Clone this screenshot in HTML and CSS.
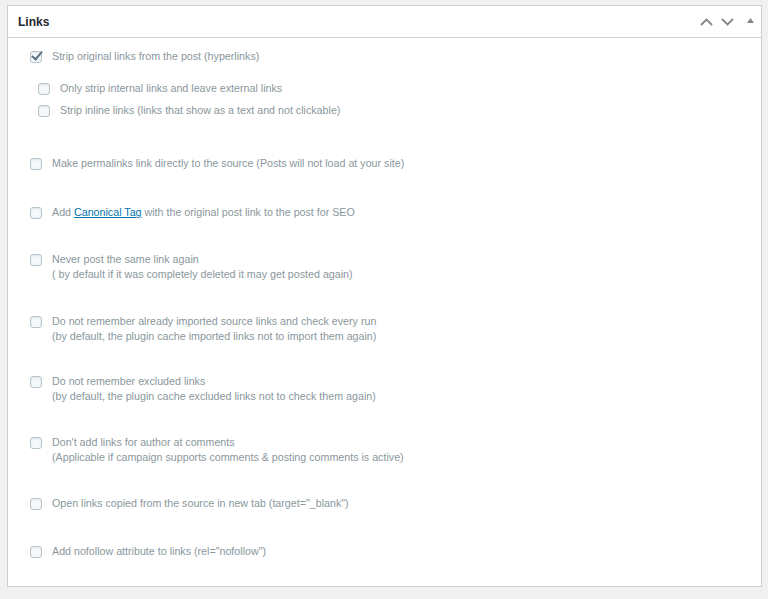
FILE: index.html
```html
<!DOCTYPE html>
<html>
<head>
    <title>Links</title>
    <link rel="stylesheet" href="styles.css">
</head>
<body>
    <div class="postbox">
        <div class="postbox-header">
            <h2>Links</h2>
            <div class="handle-actions">
                <svg width="13" height="8" viewBox="0 0 13 8"><path d="M1 7 L6.5 1.5 L12 7" fill="none" stroke="#82878c" stroke-width="1.8"/></svg>
                <svg width="13" height="8" viewBox="0 0 13 8"><path d="M1 1 L6.5 6.5 L12 1" fill="none" stroke="#82878c" stroke-width="1.8"/></svg>
                <svg width="7" height="5" viewBox="0 0 7 5"><path d="M0 5 L3.5 0 L7 5 Z" fill="#82878c"/></svg>
            </div>
        </div>

        <div class="inside">
            <div class="option first">
                <label><span class="box checked"></span><span>Strip original links from the post (hyperlinks)</span></label>
            </div>

            <div class="sub-options">
                <label><span class="box"></span><span>Only strip internal links and leave external links</span></label>
                <label><span class="box"></span><span>Strip inline links (links that show as a text and not clickable)</span></label>
            </div>

            <div class="option permalinks">
                <label><span class="box"></span><span>Make permalinks link directly to the source (Posts will not load at your site)</span></label>
            </div>

            <div class="option canonical">
                <label><span class="box"></span><span>Add <a href="#">Canonical Tag</a> with the original post link to the post for SEO</span></label>
            </div>

            <div class="option never">
                <label><span class="box"></span><span>Never post the same link again<br>( by default if it was completely deleted it may get posted again)</span></label>
            </div>

            <div class="option imported">
                <label><span class="box"></span><span>Do not remember already imported source links and check every run<br>(by default, the plugin cache imported links not to import them again)</span></label>
            </div>

            <div class="option excluded">
                <label><span class="box"></span><span>Do not remember excluded links<br>(by default, the plugin cache excluded links not to check them again)</span></label>
            </div>

            <div class="option">
                <label><span class="box"></span><span>Don't add links for author at comments<br>(Applicable if campaign supports comments &amp; posting comments is active)</span></label>
            </div>

            <div class="option">
                <label><span class="box"></span><span>Open links copied from the source in new tab (target="_blank")</span></label>
            </div>

            <div class="option last">
                <label><span class="box"></span><span>Add nofollow attribute to links (rel="nofollow")</span></label>
            </div>
        </div>
    </div>
</body>
</html>
```

FILE: styles.css
```css
body {
    margin: 0;
    padding: 5px 6px 0 7px;
    background-color: #f1f1f1;
    font-family: 'Liberation Sans', Arial, sans-serif;
    font-size: 10.7px;
    color: #8a979d;
}

.postbox {
    background-color: #fff;
    border: 1px solid #ccd0d4;
    box-shadow: 0 1px 1px rgba(0,0,0,0.04);
}

.postbox-header {
    display: flex;
    align-items: center;
    justify-content: space-between;
    height: 31px;
    border-bottom: 1px solid #ccd0d4;
    padding: 0 7px 0 10px;
}

.postbox-header h2 {
    margin: 0;
    font-size: 12px;
    font-weight: bold;
    color: #23282d;
}

.handle-actions {
    display: flex;
    align-items: center;
    gap: 8px;
    padding-top: 1px;
}

.handle-actions svg:last-child {
    margin-left: 5px;
    margin-top: -3px;
}

.inside {
    padding: 0 0 27px 22px;
}

label {
    display: flex;
    align-items: flex-start;
    gap: 10px;
    line-height: 15px;
}

.box {
    flex: none;
    position: relative;
    width: 10px;
    height: 10px;
    margin-top: 2px;
    border: 1px solid #b8c4cc;
    border-radius: 3px;
    background-color: #f5f8fa;
    box-shadow: inset 0 1px 2px rgba(0,0,0,0.08);
}

.box.checked::after {
    content: "";
    position: absolute;
    left: 3px;
    top: -3px;
    width: 4px;
    height: 9px;
    border: solid #5d7386;
    border-width: 0 2.5px 2.5px 0;
    transform: rotate(40deg);
}

a {
    color: #0073aa;
}

.option {
    margin-top: 31px;
}

.option.first {
    margin-top: 11px;
}

.sub-options {
    display: flex;
    flex-direction: column;
    gap: 7px;
    margin: 17px 0 0 8px;
}

.option.permalinks {
    margin-top: 38px;
}

.option.canonical {
    margin-top: 34px;
}

.option.never {
    margin-top: 32px;
}

.option.imported {
    margin-top: 32px;
}

.option.excluded {
    margin-top: 30px;
}

.option.last {
    margin-top: 33px;
}
```
